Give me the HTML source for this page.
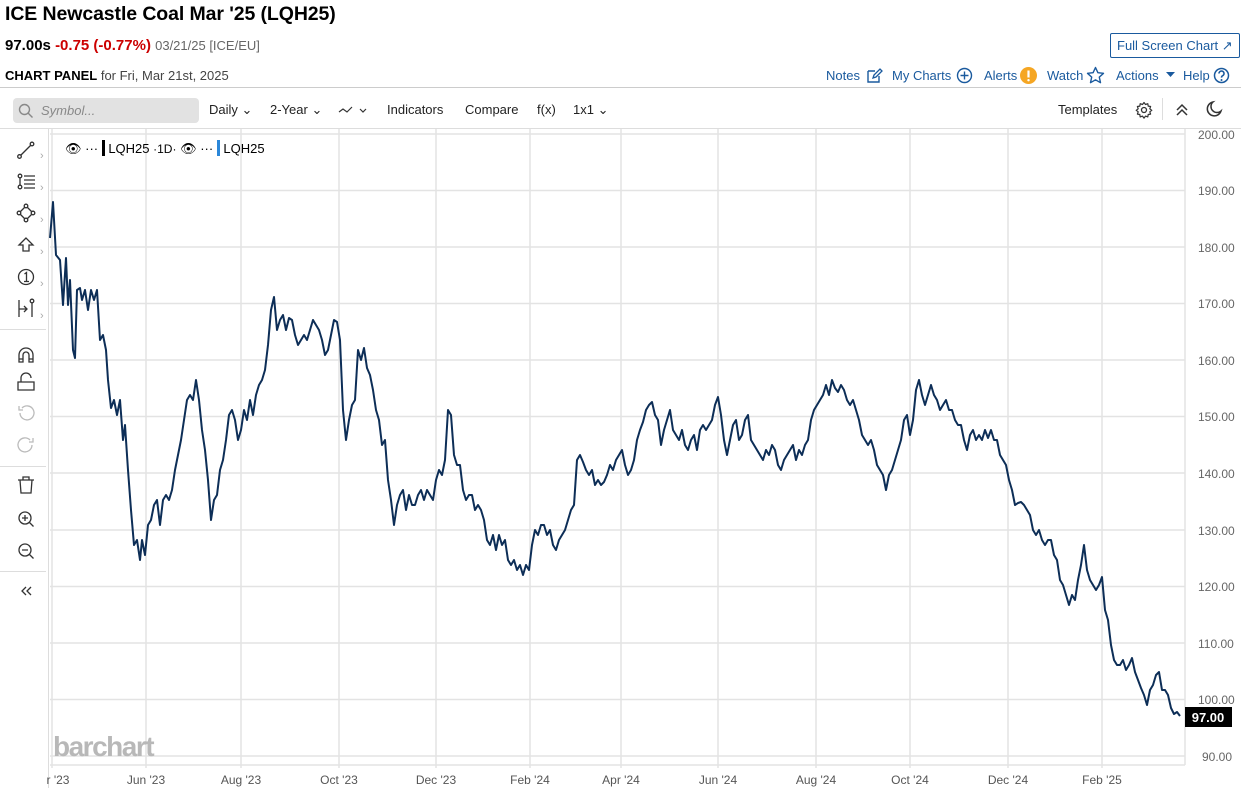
<!DOCTYPE html>
<html><head><meta charset="utf-8"><style>
*{margin:0;padding:0;box-sizing:border-box}
body{width:1241px;height:788px;background:#fff;font-family:"Liberation Sans",sans-serif;color:#000;position:relative;overflow:hidden}
.a{position:absolute;white-space:nowrap}
.blue{color:#1a5a9e}
.tb{font-size:13px;color:#222}
.nav{position:absolute;top:68px;font-size:13px;color:#1a5a9e;white-space:nowrap}
</style></head><body>
<div class="a" style="left:5px;top:3px;font-size:19.5px;font-weight:bold;letter-spacing:-0.1px">ICE Newcastle Coal Mar '25 (LQH25)</div>
<div class="a" style="left:5px;top:37px;font-size:15px"><b>97.00s</b> <b style="color:#c00">-0.75 (-0.77%)</b> <span style="color:#666;font-size:13px">03/21/25 [ICE/EU]</span></div>
<div class="a" style="left:1110px;top:33px;width:130px;height:25px;border:1px solid #1a5a9e;border-radius:2px;font-size:13px;line-height:23px;padding-left:6px" ><span class="blue">Full Screen Chart ↗</span></div>
<div class="a" style="left:5px;top:68px;font-size:13px"><b>CHART PANEL</b> <span style="color:#444">for Fri, Mar 21st, 2025</span></div>
<div class="nav" style="left:826px">Notes</div>
<svg class="a" style="left:866px;top:67px" width="17" height="17"><path d="M2 4h7M2 4v11h11v-6" fill="none" stroke="#1a5a9e" stroke-width="1.4"/><path d="M7 11l1-3 6-6 2 2-6 6z" fill="none" stroke="#1a5a9e" stroke-width="1.3"/></svg>
<div class="nav" style="left:892px">My Charts</div>
<svg class="a" style="left:956px;top:67px" width="17" height="17"><circle cx="8.5" cy="8.5" r="7" fill="none" stroke="#1a5a9e" stroke-width="1.4"/><path d="M8.5 4.5v8M4.5 8.5h8" stroke="#1a5a9e" stroke-width="1.4"/></svg>
<div class="nav" style="left:984px">Alerts</div>
<svg class="a" style="left:1020px;top:67px" width="17" height="17"><circle cx="8.5" cy="8.5" r="8.5" fill="#f5a623"/><path d="M8.5 3.5v7" stroke="#fff" stroke-width="2.2"/><circle cx="8.5" cy="13.2" r="1.2" fill="#fff"/></svg>
<div class="nav" style="left:1047px">Watch</div>
<svg class="a" style="left:1086px;top:66px" width="19" height="19"><path d="M9.5 1.5l2.4 5.2 5.6.6-4.2 3.8 1.2 5.6-5-2.9-5 2.9 1.2-5.6-4.2-3.8 5.6-.6z" fill="none" stroke="#1a5a9e" stroke-width="1.4" stroke-linejoin="round"/></svg>
<div class="nav" style="left:1116px">Actions</div>
<svg class="a" style="left:1166px;top:72px" width="9" height="6"><path d="M0 0h9L4.5 5z" fill="#1a5a9e"/></svg>
<div class="nav" style="left:1183px">Help</div>
<svg class="a" style="left:1213px;top:67px" width="17" height="17"><circle cx="8.5" cy="8.5" r="7" fill="none" stroke="#1a5a9e" stroke-width="1.5"/><path d="M6 6.5a2.5 2.5 0 1 1 3.5 2.3c-.8.4-1 .9-1 1.8" fill="none" stroke="#1a5a9e" stroke-width="1.6"/><circle cx="8.5" cy="13" r="1" fill="#1a5a9e"/></svg>
<div class="a" style="left:0;top:87px;width:1241px;height:1px;background:#ccc"></div>
<div class="a" style="left:13px;top:98px;width:186px;height:25px;background:#e2e2e2;border-radius:4px;color:#888;font-size:13px;font-style:italic;line-height:25px;padding-left:28px">Symbol...</div>
<svg class="a" style="left:18px;top:103px" width="16" height="16"><circle cx="6.5" cy="6.5" r="5" fill="none" stroke="#888" stroke-width="1.4"/><path d="M10 10l4.5 4.5" stroke="#888" stroke-width="1.4"/></svg>
<div class="a tb" style="left:209px;top:102px">Daily ⌄</div>
<div class="a tb" style="left:270px;top:102px">2-Year ⌄</div>
<svg class="a" style="left:338px;top:104px" width="32" height="12"><path d="M1 8l4-3 4 3 5-5" fill="none" stroke="#333" stroke-width="1.2"/><path d="M22 5l3 3 3-3" fill="none" stroke="#333" stroke-width="1.2"/></svg>
<div class="a tb" style="left:387px;top:102px">Indicators</div>
<div class="a tb" style="left:465px;top:102px">Compare</div>
<div class="a tb" style="left:537px;top:102px">f(x)</div>
<div class="a tb" style="left:573px;top:102px">1x1 ⌄</div>
<div class="a tb" style="left:1058px;top:102px">Templates</div>
<svg class="a" style="left:1135px;top:101px" width="18" height="18"><circle cx="9" cy="9" r="2.5" fill="none" stroke="#333" stroke-width="1.3"/><path d="M9 1.5l1.5 2 2.3-.8.4 2.4 2.4.4-.8 2.3 2 1.5-2 1.5.8 2.3-2.4.4-.4 2.4-2.3-.8-1.5 2-1.5-2-2.3.8-.4-2.4-2.4-.4.8-2.3-2-1.5 2-1.5-.8-2.3 2.4-.4.4-2.4 2.3.8z" fill="none" stroke="#333" stroke-width="1.2" stroke-linejoin="round"/></svg>
<div class="a" style="left:1162px;top:98px;width:1px;height:22px;background:#ddd"></div>
<svg class="a" style="left:1175px;top:103px" width="14" height="14"><path d="M2 7l5-5 5 5M2 12l5-5 5 5" fill="none" stroke="#333" stroke-width="1.5"/></svg>
<svg class="a" style="left:1205px;top:100px" width="18" height="18"><path d="M8 2a7 7 0 1 0 8 9A6 6 0 0 1 8 2z" fill="none" stroke="#333" stroke-width="1.5"/></svg>
<div class="a" style="left:0;top:128px;width:1241px;height:1px;background:#ddd"></div>
<div class="a" style="left:48px;top:129px;width:1px;height:659px;background:#ddd"></div>
<div class="a" style="left:0;top:329px;width:46px;height:1px;background:#ddd"></div>
<div class="a" style="left:0;top:466px;width:46px;height:1px;background:#ddd"></div>
<div class="a" style="left:0;top:571px;width:46px;height:1px;background:#ddd"></div>
<svg class="a" style="left:0;top:129px" width="48" height="480" fill="none" stroke="#333" stroke-width="1.3">
<circle cx="19.5" cy="27.5" r="1.8"/><circle cx="32" cy="15" r="1.8"/><path d="M21 26l9.5-9.5"/>
<circle cx="20" cy="47" r="1.8"/><circle cx="20" cy="58" r="1.8"/><path d="M20 49v7M24 47h11M24 51h11M24 55h11M24 59h11"/>
<circle cx="26" cy="77" r="1.8"/><circle cx="19" cy="84" r="1.8"/><circle cx="33" cy="84" r="1.8"/><circle cx="26" cy="91" r="1.8"/><path d="M24.5 78.5l-4 4M27.5 78.5l4 4M20.5 85.5l4 4M31.5 85.5l-4 4"/>
<path d="M26 109l-7 7h4v6h6v-6h4z"/>
<circle cx="26" cy="148" r="7.5"/><path d="M24.5 145l2-1.5v9M24 152.5h5"/>
<path d="M19 171v17M19 180h8M24 177l3 3-3 3"/><circle cx="32" cy="172" r="1.8"/><path d="M32 174v14"/>
<path d="M19 233v-7a7 7 0 0 1 14 0v7h-4v-7a3 3 0 0 0-6 0v7zM19 230h4M29 230h4"/>
<path d="M18 253h16v8H18zM21 253v-4a5 5 0 0 1 10 0"/>
<path d="M20 284a7 7 0 1 0 2-5M19 277v4h4" stroke="#bbb"/>
<path d="M32 316a7 7 0 1 1-2-5M33 309v4h-4" stroke="#bbb"/>
<path d="M18 351h16M23 351v-3h6v3M20 351l1 13h10l1-13"/>
<circle cx="25" cy="389" r="6"/><path d="M29.5 393.5l4 4M22 389h6M25 386v6"/>
<circle cx="25" cy="421" r="6"/><path d="M29.5 425.5l4 4M22 421h6"/>
<path d="M26 458l-4 4 4 4M31 458l-4 4 4 4"/>
</svg>
<div class="a" style="left:40px;top:140px;font-size:11px;line-height:32px;color:#aaa">›<br>›<br>›<br>›<br>›<br>›</div>
<svg class="a" style="left:0;top:0" width="1241" height="788">
<g stroke="#e3e3e3" stroke-width="1.5">
<line x1="50" x2="1185" y1="134" y2="134"/><line x1="50" x2="1185" y1="190.5" y2="190.5"/><line x1="50" x2="1185" y1="247" y2="247"/><line x1="50" x2="1185" y1="303.5" y2="303.5"/><line x1="50" x2="1185" y1="360" y2="360"/><line x1="50" x2="1185" y1="416.5" y2="416.5"/><line x1="50" x2="1185" y1="473" y2="473"/><line x1="50" x2="1185" y1="530" y2="530"/><line x1="50" x2="1185" y1="586.5" y2="586.5"/><line x1="50" x2="1185" y1="643" y2="643"/><line x1="50" x2="1185" y1="699.5" y2="699.5"/><line x1="50" x2="1185" y1="756" y2="756"/>
<line x1="52" x2="52" y1="129" y2="768"/><line x1="146" x2="146" y1="129" y2="768"/><line x1="241" x2="241" y1="129" y2="768"/><line x1="339" x2="339" y1="129" y2="768"/><line x1="436" x2="436" y1="129" y2="768"/><line x1="530" x2="530" y1="129" y2="768"/><line x1="621" x2="621" y1="129" y2="768"/><line x1="718" x2="718" y1="129" y2="768"/><line x1="816" x2="816" y1="129" y2="768"/><line x1="910" x2="910" y1="129" y2="768"/><line x1="1008" x2="1008" y1="129" y2="768"/><line x1="1102" x2="1102" y1="129" y2="768"/>
<line x1="1185" x2="1185" y1="129" y2="765"/><line x1="50" x2="1185" y1="765" y2="765"/>
</g>
<g font-family="Liberation Sans" font-size="12" fill="#666">
<text x="1198" y="139">200.00</text><text x="1198" y="195">190.00</text><text x="1198" y="252">180.00</text><text x="1198" y="308">170.00</text><text x="1198" y="365">160.00</text><text x="1198" y="421">150.00</text><text x="1198" y="478">140.00</text><text x="1198" y="535">130.00</text><text x="1198" y="591">120.00</text><text x="1198" y="648">110.00</text><text x="1198" y="704">100.00</text><text x="1202" y="761">90.00</text>
</g>
<g font-family="Liberation Sans" font-size="12" fill="#555" text-anchor="middle">
<text x="58" y="784">r '23</text><text x="146" y="784">Jun '23</text><text x="241" y="784">Aug '23</text><text x="339" y="784">Oct '23</text><text x="436" y="784">Dec '23</text><text x="530" y="784">Feb '24</text><text x="621" y="784">Apr '24</text><text x="718" y="784">Jun '24</text><text x="816" y="784">Aug '24</text><text x="910" y="784">Oct '24</text><text x="1008" y="784">Dec '24</text><text x="1102" y="784">Feb '25</text>
</g>
<text x="53" y="756" font-family="Liberation Sans" font-size="28" font-weight="bold" fill="#b8b8b8" letter-spacing="-1.5">barchart</text>
<polyline fill="none" stroke="#0d2e57" stroke-width="2" stroke-linejoin="round" points="50,238 53,202 56,255 60,260 63,305 66,258 68,305 70,280 73,350 75,358 77,290 80,288 82,300 85,290 88,310 91,290 94,300 97,290 100,340 103,335 106,350 108,380 111,408 114,400 117,415 120,400 123,440 125,425 128,470 131,510 134,545 137,540 140,560 142,540 145,555 148,525 151,520 154,505 157,500 160,525 163,500 166,495 169,500 172,490 175,470 178,455 181,440 184,420 187,400 190,395 193,400 196,380 199,400 202,430 205,450 208,480 211,520 214,500 217,495 220,470 223,460 226,440 229,415 232,410 235,420 238,440 241,430 244,410 247,420 250,400 253,415 256,395 259,385 262,380 265,370 268,345 271,310 274,297 277,330 280,320 283,315 286,330 289,318 292,320 295,335 298,345 301,340 304,335 307,340 310,330 313,320 316,325 319,330 322,340 325,355 328,350 331,335 334,320 337,322 340,340 343,410 346,440 349,420 352,405 355,400 358,350 361,360 364,348 367,368 370,375 373,390 376,410 379,420 382,445 385,440 388,480 391,500 394,525 397,505 400,495 403,490 406,510 409,495 412,505 415,505 418,495 421,490 424,500 427,490 430,495 433,500 436,480 439,470 442,475 445,460 448,410 451,415 454,455 457,465 460,465 463,490 466,500 469,495 472,495 475,510 478,505 481,510 484,520 487,540 490,545 493,535 496,550 499,535 502,545 505,540 508,560 511,565 514,560 517,570 520,565 523,575 526,565 529,570 532,545 535,530 538,535 541,525 544,525 547,535 550,530 553,545 556,550 559,540 562,535 565,530 568,520 571,510 574,505 577,460 580,455 583,462 586,470 589,475 592,470 595,485 598,480 601,485 604,482 607,475 610,465 613,470 616,460 619,455 622,450 625,465 628,475 631,470 634,460 637,440 640,430 643,422 646,410 649,405 652,402 655,415 658,420 661,445 664,430 667,420 670,410 673,430 676,435 679,440 682,430 685,445 688,450 691,440 694,435 697,450 700,430 703,425 706,430 709,425 712,420 715,405 718,397 721,415 724,440 727,455 730,440 733,425 736,420 739,440 742,435 745,420 748,415 751,440 754,445 757,450 760,455 763,460 766,450 769,455 772,445 775,450 778,465 781,470 784,460 787,455 790,450 793,445 796,460 799,450 802,455 805,445 808,440 811,420 814,410 817,405 820,400 823,395 826,385 829,395 832,380 835,388 838,392 841,385 844,390 847,400 850,405 853,400 856,410 859,420 862,435 865,440 868,445 871,440 874,450 877,465 880,470 883,475 886,490 889,475 892,470 895,460 898,450 901,440 904,420 907,415 910,435 913,420 916,390 919,380 922,395 925,405 928,395 931,385 934,395 937,400 940,410 943,405 946,400 949,410 952,410 955,420 958,425 961,425 964,440 967,450 970,435 973,430 976,440 979,435 982,440 985,430 988,438 991,430 994,440 997,440 1000,455 1003,460 1006,465 1009,480 1012,490 1015,505 1018,503 1021,502 1024,505 1027,510 1030,515 1033,530 1036,535 1039,530 1042,540 1045,545 1048,540 1051,540 1054,555 1057,560 1060,580 1063,585 1066,595 1069,605 1072,595 1075,600 1078,580 1081,565 1084,545 1087,570 1090,580 1093,585 1096,590 1099,585 1102,577 1105,610 1108,620 1111,645 1114,660 1117,665 1120,665 1123,660 1126,670 1129,665 1132,658 1135,672 1138,680 1141,688 1144,695 1147,705 1150,690 1153,685 1156,675 1159,672 1162,690 1165,690 1168,695 1171,708 1174,714 1177,712 1180,716"/>
<rect x="1185" y="707" width="47" height="20" fill="#000"/>
<text x="1208" y="722" text-anchor="middle" font-family="Liberation Sans" font-size="13" font-weight="bold" fill="#fff">97.00</text>
</svg>
<div class="a" style="left:65px;top:140px;font-size:13px;color:#000">👁︎ ··· <span style="display:inline-block;width:3px;height:16px;background:#000;vertical-align:-3px"></span> LQH25 <span style="font-size:12px">·1D·</span> 👁︎ ··· <span style="display:inline-block;width:3px;height:16px;background:#2b87d9;vertical-align:-3px"></span> LQH25</div>
</body></html>
